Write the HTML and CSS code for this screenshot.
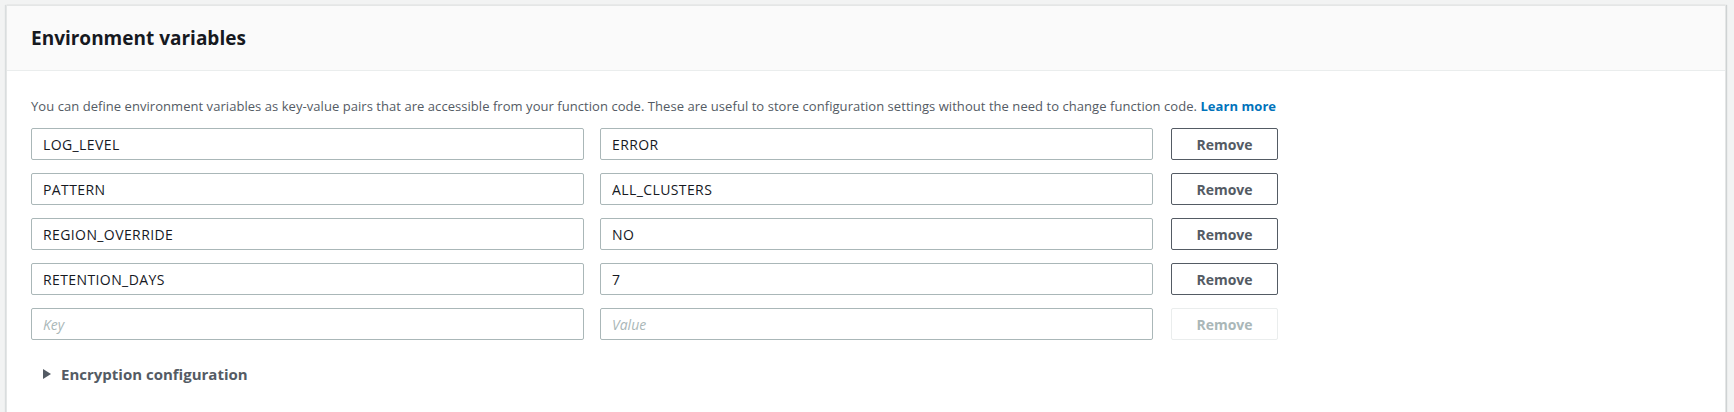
FILE: index.html
```html
<!DOCTYPE html>
<html>
<head>
<meta charset="utf-8">
<link rel="stylesheet" href="styles.css">
</head>
<body>
<div class="page">
  <section class="card">
    <header class="card-header">
      <h2>Environment variables</h2>
    </header>
    <div class="card-body">
      <p class="desc">You can define environment variables as key-value pairs that are accessible from your function code. These are useful to store configuration settings without the need to change function code. <a href="#">Learn more</a></p>
      <div class="rows">
        <div class="row">
          <input class="field" value="LOG_LEVEL">
          <input class="field" value="ERROR">
          <button class="btn">Remove</button>
        </div>
        <div class="row">
          <input class="field" value="PATTERN">
          <input class="field" value="ALL_CLUSTERS">
          <button class="btn">Remove</button>
        </div>
        <div class="row">
          <input class="field" value="REGION_OVERRIDE">
          <input class="field" value="NO">
          <button class="btn">Remove</button>
        </div>
        <div class="row">
          <input class="field" value="RETENTION_DAYS">
          <input class="field" value="7">
          <button class="btn">Remove</button>
        </div>
        <div class="row">
          <input class="field" placeholder="Key">
          <input class="field" placeholder="Value">
          <button class="btn btn-disabled" disabled>Remove</button>
        </div>
      </div>
      <div class="expander">
        <span class="caret"></span>
        <span class="expander-label">Encryption configuration</span>
      </div>
    </div>
  </section>
</div>
</body>
</html>
```

FILE: styles.css
```css
html, body {
  margin: 0;
  padding: 0;
  background: #f2f3f3;
  font-family: "Open Sans", Roboto, sans-serif;
  color: #16191f;
}

.page {
  padding: 5px 8px 0 6px;
}

.card {
  background: #ffffff;
  border: 1px solid #e4e6e6;
  border-bottom: none;
  box-shadow: 1px 0 1px rgba(0, 28, 36, 0.15), -1px 0 1px rgba(0, 28, 36, 0.1);
  height: 420px;
}

.card-header {
  background: #fafafa;
  border-bottom: 1px solid #eaeded;
  height: 64px;
  display: flex;
  align-items: center;
  padding: 0 24px;
}

.card-header h2 {
  margin: 0;
  font-size: 19px;
  font-weight: 700;
  color: #16191f;
  letter-spacing: 0;
}

.card-body {
  padding: 25px 24px 0 24px;
}

.desc {
  margin: 0;
  font-size: 13px;
  line-height: 20px;
  letter-spacing: 0.05px;
  color: #545b64;
}

.desc a {
  color: #0073bb;
  font-weight: 700;
  text-decoration: none;
}

.rows {
  margin-top: 12px;
  display: flex;
  flex-direction: column;
  gap: 13px;
}

.row {
  display: grid;
  grid-template-columns: 553px 553px 109px;
  column-gap: 16px;
  align-items: stretch;
}

.row .btn {
  margin-left: 2px;
}

.field {
  box-sizing: border-box;
  height: 32px;
  border: 1px solid #aab7b8;
  border-radius: 2px;
  padding: 0 11px;
  font-family: "Open Sans", Roboto, sans-serif;
  font-size: 14px;
  letter-spacing: 0.4px;
  color: #16191f;
  background: #fff;
  outline: none;
}

.field::placeholder {
  color: #aab7b8;
  font-style: italic;
  letter-spacing: 0;
}

.btn {
  box-sizing: border-box;
  height: 32px;
  border: 1px solid #545b64;
  border-radius: 2px;
  background: #fff;
  color: #545b64;
  font-family: "Open Sans", Roboto, sans-serif;
  font-size: 14px;
  font-weight: 700;
  padding: 0;
}

.btn-disabled {
  border-color: #eaeded;
  color: #aab7b8;
}

.expander {
  margin-top: 24px;
  display: flex;
  align-items: center;
  height: 20px;
  padding-left: 12px;
}

.caret {
  width: 0;
  height: 0;
  border-top: 5.5px solid transparent;
  border-bottom: 5.5px solid transparent;
  border-left: 8px solid #545b64;
  margin-right: 10px;
}

.expander-label {
  font-size: 15px;
  font-weight: 700;
  color: #545b64;
}
```
